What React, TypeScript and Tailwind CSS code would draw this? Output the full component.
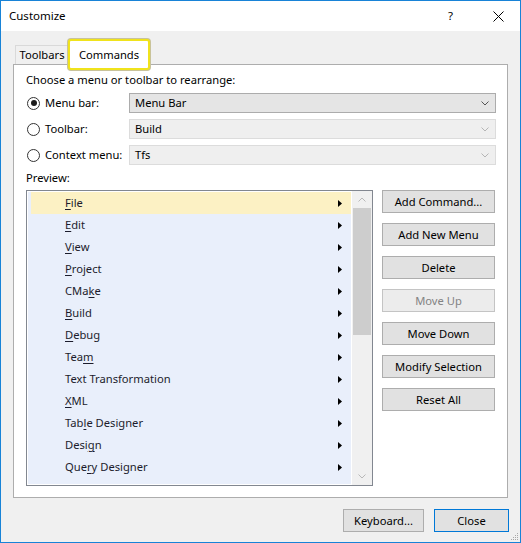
import React from "react";

const FONT = { fontFamily: '"Noto Sans", "Open Sans", sans-serif' };

type Item = { pre: string; key: string; post: string };
const items: Item[] = [
  { pre: "", key: "F", post: "ile" },
  { pre: "", key: "E", post: "dit" },
  { pre: "", key: "V", post: "iew" },
  { pre: "", key: "P", post: "roject" },
  { pre: "CMa", key: "k", post: "e" },
  { pre: "", key: "B", post: "uild" },
  { pre: "", key: "D", post: "ebug" },
  { pre: "Tea", key: "m", post: "" },
  { pre: "Text Transformation", key: "", post: "" },
  { pre: "", key: "X", post: "ML" },
  { pre: "Tab", key: "l", post: "e Designer" },
  { pre: "Desi", key: "g", post: "n" },
  { pre: "Que", key: "r", post: "y Designer" },
];

function Chevron({ color }: { color: string }) {
  return (
    <svg width="8" height="5" viewBox="0 0 8 5">
      <path d="M0.5 0.5 L4 4 L7.5 0.5" fill="none" stroke={color} strokeWidth="1" />
    </svg>
  );
}

function Radio({ checked }: { checked?: boolean }) {
  return (
    <div className="w-[13px] h-[13px] rounded-full border border-[#333333] bg-white flex items-center justify-center shrink-0">
      {checked && <div className="w-[6px] h-[6px] rounded-full bg-[#1a1a1a]" />}
    </div>
  );
}

function OptionRow({ label, value, checked, enabled }: { label: string; value: string; checked?: boolean; enabled?: boolean }) {
  return (
    <div className="flex items-center h-[20px]">
      <div className="w-[103px] flex items-center gap-[5px] pl-[1px]">
        <Radio checked={checked} />
        <span className="text-[11.2px] leading-[16px] text-black">{label}</span>
      </div>
      <div
        className={
          "flex-1 h-[20px] flex items-center justify-between pl-[5px] pr-[6px] border " +
          (enabled ? "bg-[#e5e5e5] border-[#acacac]" : "bg-[#efefef] border-[#dcdcdc]")
        }
      >
        <span className="text-[11.2px] leading-[16px] text-black">{value}</span>
        <Chevron color={enabled ? "#555555" : "#b5b5b5"} />
      </div>
    </div>
  );
}

function Btn({ label, disabled }: { label: string; disabled?: boolean }) {
  return (
    <div
      className={
        "w-[113px] h-[23px] flex items-center justify-center border text-[11.2px] leading-[16px] " +
        (disabled ? "bg-[#ececec] border-[#c4c4c4] text-[#838383]" : "bg-[#e1e1e1] border-[#adadad] text-black")
      }
    >
      {label}
    </div>
  );
}

function Arrow() {
  return (
    <svg width="4" height="7" viewBox="0 0 4 7">
      <path d="M0 0 L4 3.5 L0 7 Z" fill="#000000" />
    </svg>
  );
}

export default function App() {
  return (
    <div
      style={FONT}
      className="w-[521px] h-[543px] border border-[#1883d7] bg-[#f0f0f0] flex flex-col relative overflow-hidden select-none"
    >
      {/* Title bar */}
      <div className="h-[30px] bg-white flex items-center shrink-0">
        <span className="ml-[8px] text-[11.5px] leading-[16px] text-black">Customize</span>
        <div className="flex-1" />
        <span className="text-[11.5px] leading-[16px] text-black mr-[40px]">?</span>
        <svg width="11" height="11" viewBox="0 0 11 11" className="mr-[16px]">
          <path d="M0.5 0.5 L10.5 10.5 M10.5 0.5 L0.5 10.5" stroke="#000000" strokeWidth="1" />
        </svg>
      </div>

      {/* Body */}
      <div className="pt-[8px] flex flex-col">
        {/* Tabs */}
        <div className="flex items-start ml-[14px] h-[25px]">
          <div className="mt-[6px] h-[19px] w-[54px] border border-b-0 border-[#d9d9d9] bg-[#f0f0f0] flex items-center justify-center text-[11.2px] leading-[16px] text-black">
            Toolbars
          </div>
          <div className="relative z-10 h-[31px] w-[82px] -ml-[1px] bg-white border-2 border-[#f0e31c] rounded-[3px] shadow-[0_0_0_1px_#c9c39a] flex items-center justify-center text-[11.2px] leading-[16px] text-black">
            Commands
          </div>
        </div>

        {/* Panel */}
        <div className="ml-[12px] w-[495px] h-[434px] border border-[#adadad] bg-white pt-[7px] pl-[12px] pr-[11px] flex flex-col">
          <div className="text-[11.2px] leading-[16px] text-black">Choose a menu or toolbar to rearrange:</div>
          <div className="mt-[5px] flex flex-col gap-[6px]">
            <OptionRow label="Menu bar:" value="Menu Bar" checked enabled />
            <OptionRow label="Toolbar:" value="Build" />
            <OptionRow label="Context menu:" value="Tfs" />
          </div>
          <div className="mt-[5px] text-[11.2px] leading-[16px] text-black">Preview:</div>
          <div className="mt-[4px] flex gap-[9px]">
            {/* List */}
            <div className="w-[347px] h-[296px] border border-[#828790] bg-white flex">
              <div className="ml-[1px] mt-[1px] mb-[1px] w-[323px] bg-[#e9effb] pl-[3px] flex flex-col overflow-hidden">
                {items.map((it, i) => (
                  <div
                    key={i}
                    className={
                      "h-[22px] shrink-0 flex items-center pl-[34px] pr-[9px] " + (i === 0 ? "bg-[#fcf1c4]" : "")
                    }
                  >
                    <span className="flex-1 text-[11.2px] leading-[16px] text-[#1c1c2c]">
                      {it.pre}
                      {it.key && <span className="underline underline-offset-[2px]">{it.key}</span>}
                      {it.post}
                    </span>
                    <Arrow />
                  </div>
                ))}
              </div>
              <div className="ml-[1px] flex-1 bg-[#f0f0f0] flex flex-col">
                <div className="h-[17px] flex items-center justify-center">
                  <svg width="8" height="5" viewBox="0 0 8 5">
                    <path d="M0.5 4.5 L4 1 L7.5 4.5" fill="none" stroke="#b8b8b8" strokeWidth="1" />
                  </svg>
                </div>
                <div className="h-[127px] mx-[1px] bg-[#cdcdcd]" />
                <div className="flex-1" />
                <div className="h-[17px] flex items-center justify-center">
                  <Chevron color="#b8b8b8" />
                </div>
              </div>
            </div>
            {/* Buttons */}
            <div className="flex flex-col gap-[10px]">
              <Btn label="Add Command..." />
              <Btn label="Add New Menu" />
              <Btn label="Delete" />
              <Btn label="Move Up" disabled />
              <Btn label="Move Down" />
              <Btn label="Modify Selection" />
              <Btn label="Reset All" />
            </div>
          </div>
        </div>

        {/* Bottom buttons */}
        <div className="mt-[11px] flex justify-end gap-[10px] pr-[11px]">
          <div className="w-[81px] h-[23px] bg-[#e1e1e1] border border-[#adadad] flex items-center justify-center text-[11.2px] leading-[16px] text-black">
            Keyboard...
          </div>
          <div className="w-[75px] h-[23px] bg-[#e1e1e1] border border-[#0078d7] flex items-center justify-center text-[11.2px] leading-[16px] text-black">
            Close
          </div>
        </div>
      </div>

      {/* Resize grip */}
      <svg width="10" height="10" viewBox="0 0 10 10" className="absolute right-[1px] bottom-[1px]">
        {[
          [8, 2],
          [6, 4],
          [8, 4],
          [4, 6],
          [6, 6],
          [8, 6],
          [2, 8],
          [4, 8],
          [6, 8],
          [8, 8],
        ].map(([x, y], i) => (
          <rect key={i} x={x} y={y} width="1" height="1" fill="#a8a8a8" />
        ))}
      </svg>
    </div>
  );
}
